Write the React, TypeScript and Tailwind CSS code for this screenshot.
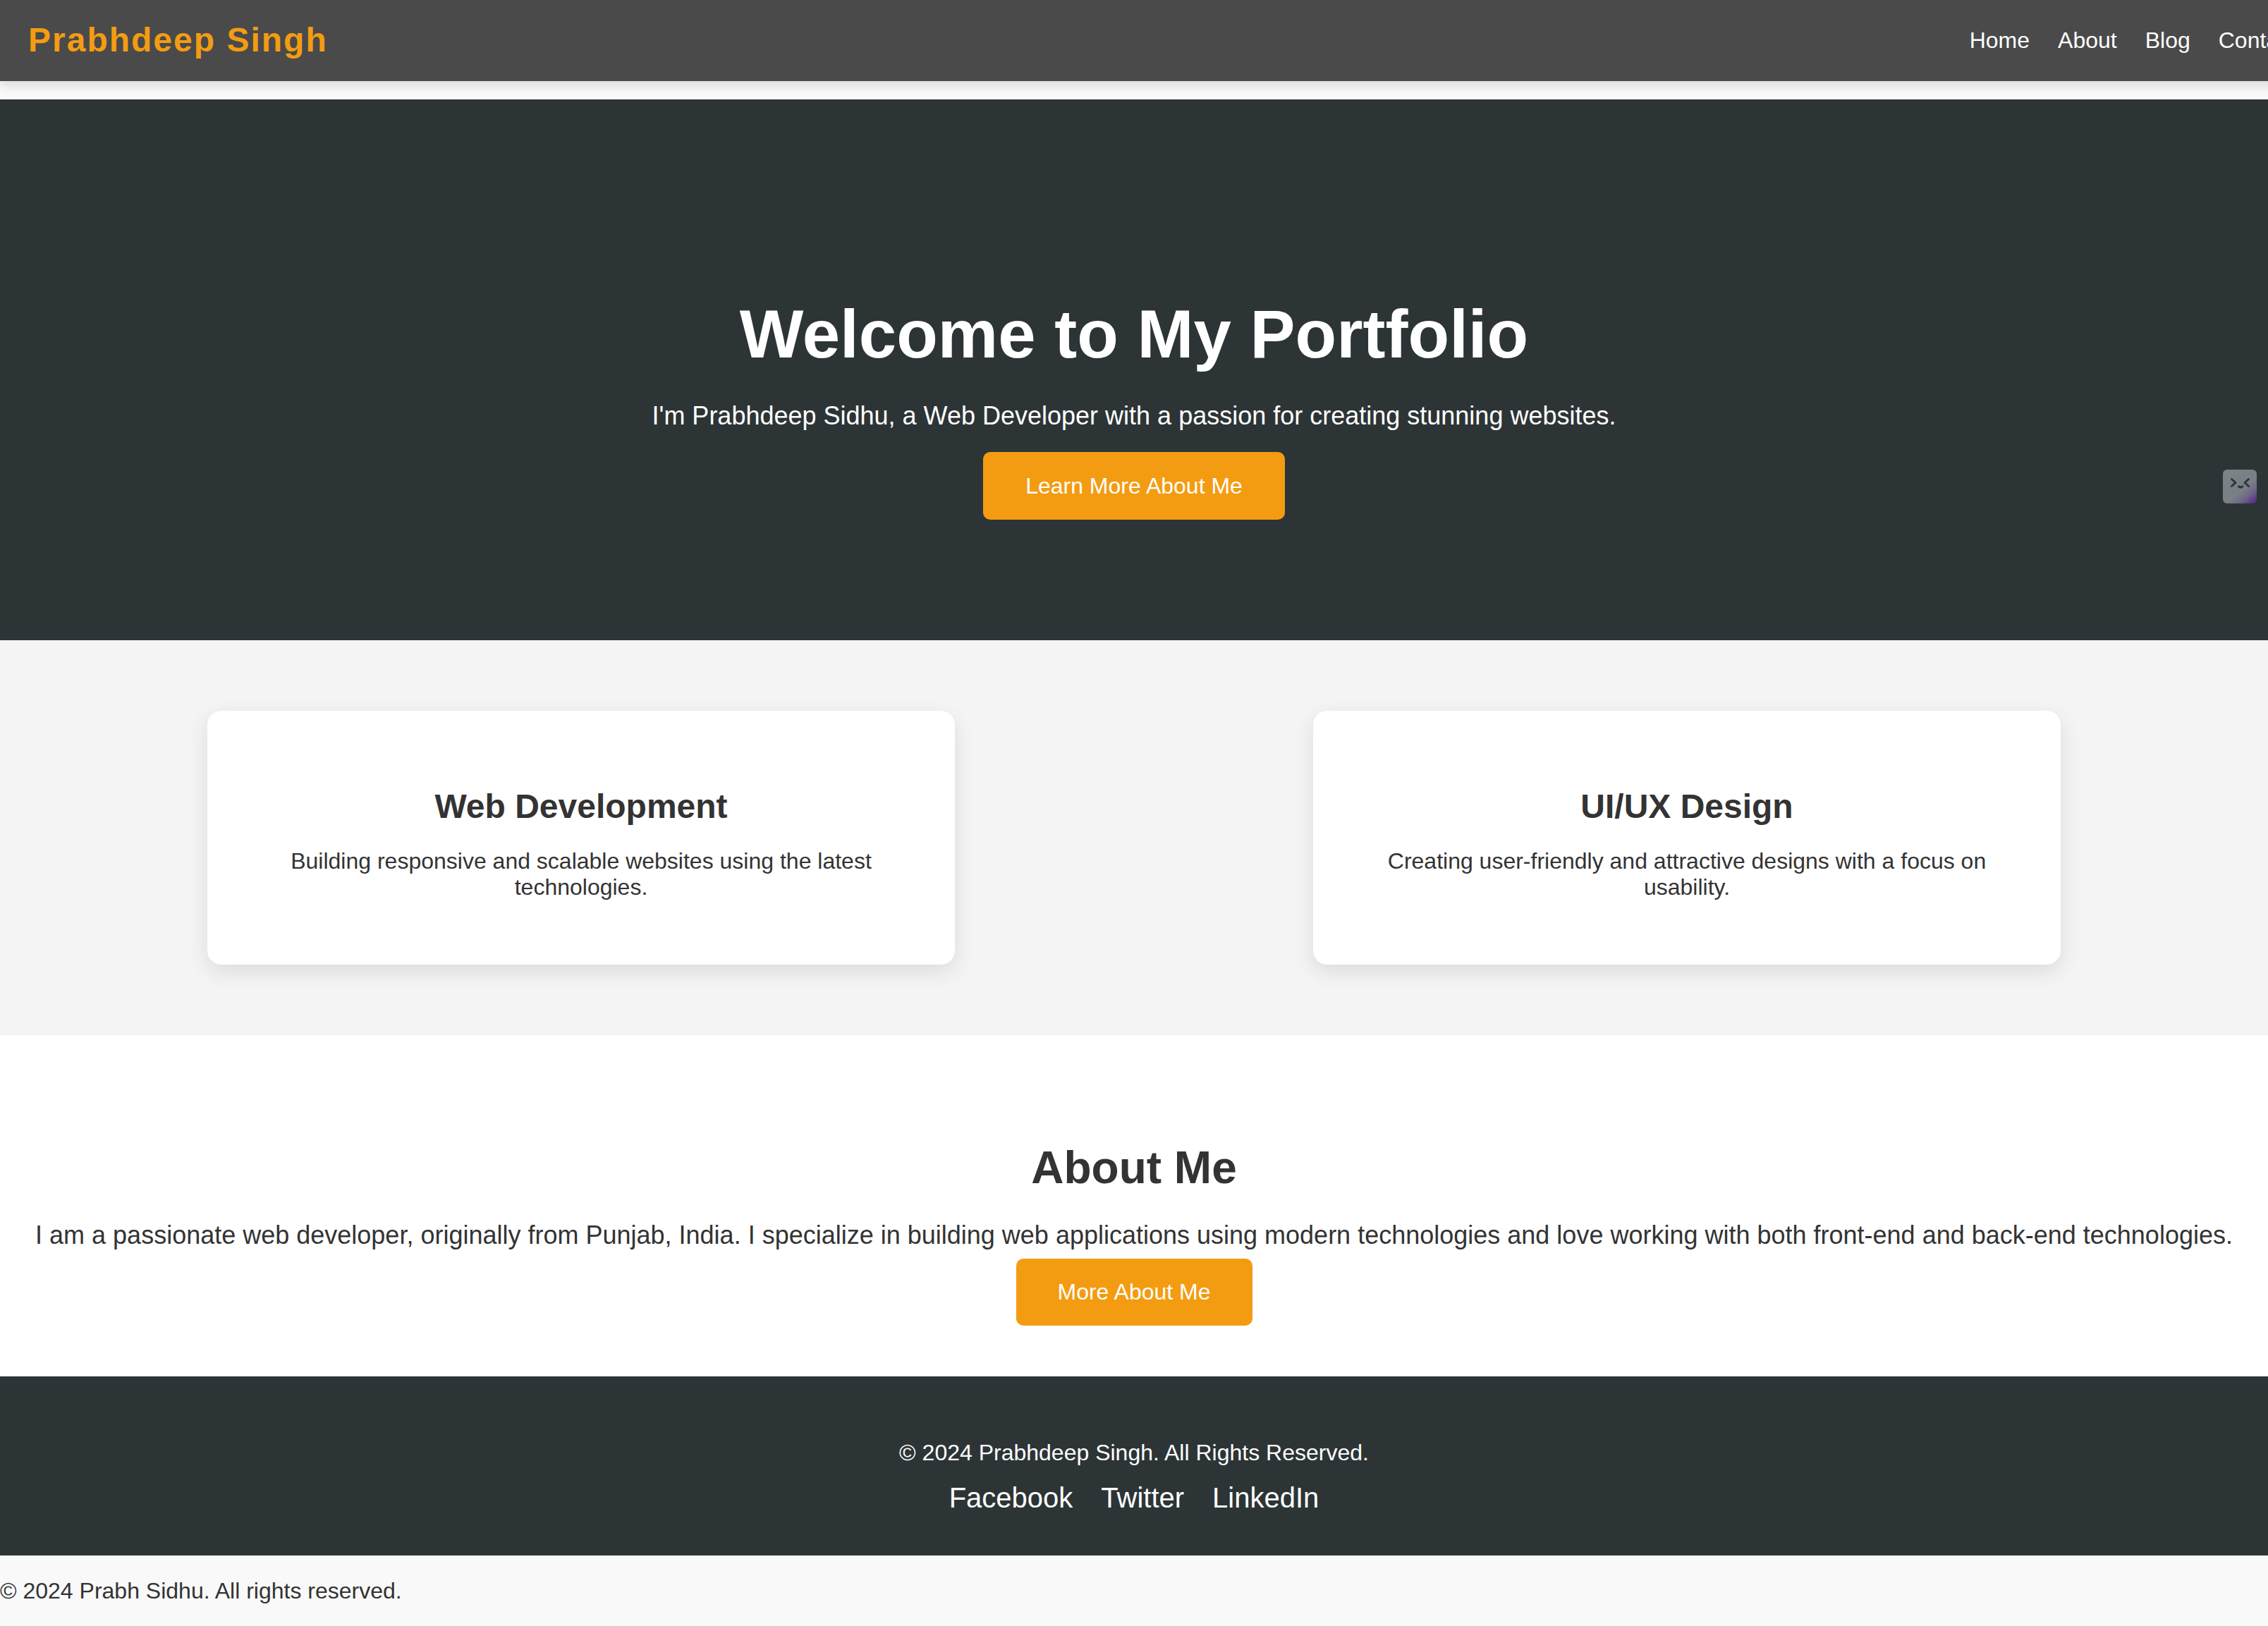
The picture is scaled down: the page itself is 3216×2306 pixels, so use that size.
const navLinks = ["Home", "About", "Blog", "Contact"];

const services = [
  {
    title: "Web Development",
    text: "Building responsive and scalable websites using the latest technologies.",
  },
  {
    title: "UI/UX Design",
    text: "Creating user-friendly and attractive designs with a focus on usability.",
  },
];

const socialLinks = ["Facebook", "Twitter", "LinkedIn"];

function Navbar() {
  return (
    <header className="mb-[26px] w-[calc(100%+80px)] bg-[#4a4a4a] px-10 pt-[29px] pb-[31px] shadow-[0_8px_12px_rgba(0,0,0,0.1)]">
      <nav className="flex items-center justify-between">
        <a href="#home" className="text-[48px] leading-[55px] font-bold tracking-[2px] text-[#f39c12]">
          Prabhdeep Singh
        </a>
        <ul className="flex gap-10 leading-9 text-white">
          {navLinks.map((label) => (
            <li key={label}>
              <a href={`#${label.toLowerCase()}`}>{label}</a>
            </li>
          ))}
        </ul>
      </nav>
    </header>
  );
}

function Hero() {
  return (
    <section className="flex flex-col items-center bg-[#2d3436] px-10 pt-[278px] pb-[171px] text-center text-white">
      <h1 className="text-[96px] leading-[110px] font-bold">Welcome to My Portfolio</h1>
      <p className="mt-10 text-[36px] leading-[41px]">
        I'm Prabhdeep Sidhu, a Web Developer with a passion for creating stunning websites.
      </p>
      <a href="#about" className="mt-[31px] rounded-[10px] bg-[#f39c12] px-[60px] py-[30px] leading-9">
        Learn More About Me
      </a>
    </section>
  );
}

function Services() {
  return (
    <section className="flex justify-around bg-[#f4f4f4] px-10 py-[100px]">
      {services.map((service) => (
        <article
          key={service.title}
          className="w-[calc(30%+120px)] rounded-[20px] bg-white px-[60px] pt-[108px] pb-[91px] text-center shadow-[0_10px_30px_rgba(0,0,0,0.1)]"
        >
          <h3 className="text-[48px] leading-[55px] font-bold">{service.title}</h3>
          <p className="mt-8">{service.text}</p>
        </article>
      ))}
    </section>
  );
}

function About() {
  return (
    <section className="flex flex-col items-center bg-white px-10 pt-[151px] pb-[72px] text-center">
      <h2 className="text-[64px] leading-[74px] font-bold">About Me</h2>
      <p className="mt-[38px] text-[36px] leading-[41px]">
        I am a passionate web developer, originally from Punjab, India. I specialize in building web applications using
        modern technologies and love working with both front-end and back-end technologies.
      </p>
      <a href="#more" className="mt-[13px] rounded-[10px] bg-[#f39c12] px-[59px] py-[29px] leading-[37px] text-white">
        More About Me
      </a>
    </section>
  );
}

function Footer() {
  return (
    <footer className="flex flex-col items-center bg-[#2d3436] pt-[90px] pb-[59px] text-white">
      <p>© 2024 Prabhdeep Singh. All Rights Reserved.</p>
      <div className="mt-[22px] flex gap-10 text-[40px] leading-[46px]">
        {socialLinks.map((label) => (
          <a key={label} href={`#${label.toLowerCase()}`}>
            {label}
          </a>
        ))}
      </div>
    </footer>
  );
}

function AssistantBadge() {
  return (
    <button type="button" aria-label="Open assistant" className="absolute top-[666px] right-4 size-12">
      <svg viewBox="0 0 48 48" className="size-full" fill="none" aria-hidden="true">
        <defs>
          <linearGradient id="badge" x1="4" y1="0" x2="44" y2="48" gradientUnits="userSpaceOnUse">
            <stop offset="0" stopColor="#7b8487" />
            <stop offset="0.6" stopColor="#797f85" />
            <stop offset="0.8" stopColor="#6d6387" />
            <stop offset="0.95" stopColor="#5b3784" />
          </linearGradient>
        </defs>
        <rect width="48" height="48" rx="6" fill="url(#badge)" />
        <g stroke="#2b3540" strokeWidth="3" strokeLinecap="round" strokeLinejoin="round">
          <path d="M12.500 13.500l5.500 5l-5.500 5" />
          <path d="M36.500 13.500l-5.500 5l5.500 5" />
          <path d="M22.500 23.800q2.700 2.600 5.400 0" />
        </g>
      </svg>
    </button>
  );
}

export default function App() {
  return (
    <div className="relative min-h-screen overflow-hidden bg-[#f9f9f9] font-['Liberation_Sans',Arial,sans-serif] text-[32px] leading-[37px] text-[#333]">
      <Navbar />
      <main>
        <Hero />
        <Services />
        <About />
      </main>
      <Footer />
      <p className="my-8">© 2024 Prabh Sidhu. All rights reserved.</p>
      <AssistantBadge />
    </div>
  );
}
